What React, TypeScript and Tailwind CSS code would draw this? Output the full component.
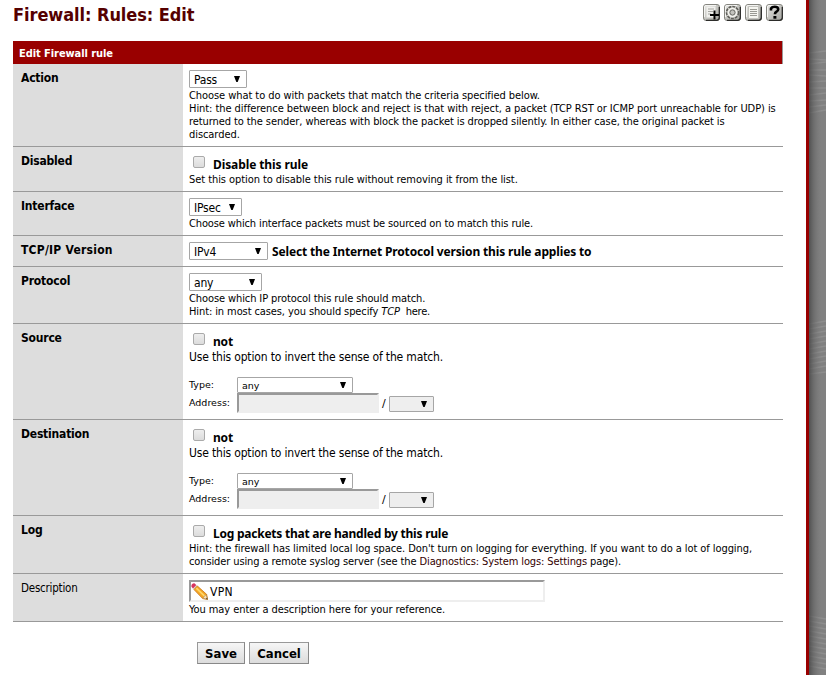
import type { ReactNode } from "react";

function Select({ value = "", className }: { value?: string; className: string }) {
  return (
    <div className={`flex shrink-0 items-center justify-between rounded-[1px] border border-[#a6a6a6] pl-1 pr-[6px] ${className}`}>
      <span className="pt-px">{value}</span>
      <svg width="6" height="6" viewBox="0 0 6 6">
        <path d="M0 0h6L3.7 6H2.3z" fill="#000" />
      </svg>
    </div>
  );
}

function Checkbox() {
  return <span className="ml-1 block size-3 shrink-0 rounded-[2px] border border-[#aaa] bg-linear-to-b from-[#eee] to-[#dcdcdc]" />;
}

function Check({ children, className = "pt-[3px]", textClass = "mt-[2px] tracking-[-0.2px]" }: { children: ReactNode; className?: string; textClass?: string }) {
  return (
    <div className={`flex h-5 items-start ${className}`}>
      <Checkbox />
      <span className={`ml-2 font-['Noto_Sans',sans-serif] text-[12px] leading-[14px] font-bold whitespace-nowrap ${textClass}`}>{children}</span>
    </div>
  );
}

function Row({ label, className, labelClass = "font-bold text-[12px] tracking-[-0.2px]", children }: { label: string; className: string; labelClass?: string; children: ReactNode }) {
  return (
    <div className={`flex border-b border-[#999] ${className}`}>
      <div className={`w-[170px] shrink-0 bg-[#ddd] pt-[6px] pl-2 leading-4 ${labelClass}`}>{label}</div>
      <div className="min-w-0 grow pt-[6px] pl-[6px]">{children}</div>
    </div>
  );
}

function Hint({ children, className = "", tracking = "tracking-[-0.065px]" }: { children: ReactNode; className?: string; tracking?: string }) {
  return <div className={`text-[11px] leading-[13px] whitespace-nowrap ${tracking} ${className}`}>{children}</div>;
}

function Address() {
  return (
    <>
      <Check className="pt-[3px]" textClass="mt-[2px] tracking-[-0.2px]">not</Check>
      <div className="-mt-px h-[28px] text-[12px] leading-4 tracking-[-0.165px] whitespace-nowrap">Use this option to invert the sense of the match.</div>
      <div className="flex h-4 items-center font-['DejaVu_Sans',sans-serif] text-[9.5px]">
        <span className="w-12 pt-px">Type:</span>
        <Select value="any" className="h-4 w-[116px] leading-[13px]" />
      </div>
      <div className="flex h-5 items-center font-['DejaVu_Sans',sans-serif] text-[9.5px]">
        <span className="w-12">Address:</span>
        <div className="h-5 w-[142px] border-2 border-[#eee] border-t-[#999] border-l-[#999] bg-[#eee]" />
        <span className="w-[10px] pt-[2px] pl-[3px] text-[11px]">/</span>
        <Select className="mt-[2px] h-4 w-[45px] bg-[#eee]" />
      </div>
    </>
  );
}

function IconTile({ children }: { children: ReactNode }) {
  return (
    <svg width="17" height="17" viewBox="0 0 17 17">
      <defs>
        <linearGradient id="tile" x1="0" y1="0" x2="1" y2="1">
          <stop offset="0" stopColor="#e9e9e6" />
          <stop offset="1" stopColor="#a2a29d" />
        </linearGradient>
      </defs>
      <rect x="0.5" y="0.5" width="16" height="16" rx="2.5" fill="url(#tile)" stroke="#85857f" />
      <path d="M16.3 3v10.5q0 2.8-2.8 2.8H3" fill="none" stroke="#2c2c2a" strokeWidth="1.3" />
      <path d="M1.5 13V3q0-1.5 1.5-1.5h10" fill="none" stroke="#f4f4f2" />
      {children}
    </svg>
  );
}

function Pencil() {
  return (
    <svg width="17" height="17" viewBox="0 0 16 16" className="shrink-0">
      <path d="M0.4 3.6Q0 0.6 3.2 0.3L5.2 2 2 5.4z" fill="#d8345f" />
      <path d="M1.9 5.1 5 1.8 6.2 2.9 3.1 6.3z" fill="#d9cfc8" />
      <path d="M2.8 6.2 6 2.8l8.7 7.9 1 4.8-4.7-.8z" fill="#f5a623" stroke="#c56e10" strokeWidth="0.7" />
      <path d="M5 4.8l8.3 8" stroke="#ffd76a" strokeWidth="1.5" />
      <path d="M11 14.3l3.2-3.4 1.3 4.4z" fill="#f5dfba" stroke="#a97835" strokeWidth="0.5" />
      <path d="M14.1 14.9l1-1.1.5 1.8z" fill="#333" />
    </svg>
  );
}

function Button({ children, className }: { children: ReactNode; className: string }) {
  return (
    <button className={`h-[22px] border border-[#999] border-r-[#888] border-b-[#888] bg-linear-to-b from-[#f6f6f6] to-[#dcdcdc] pt-px text-[13px] leading-5 font-bold ${className}`}>{children}</button>
  );
}

export default function App() {
  return (
    <div className="flex h-[675px] w-[826px] overflow-hidden bg-white font-['DejaVu_Sans_Condensed','DejaVu_Sans',sans-serif] text-black">
      <main className="w-[806px] shrink-0 pl-[13px]">
        <header className="flex h-[41px] w-[770px] items-start justify-between pt-1">
          <h1 className="-mt-px text-[18px] leading-[24px] font-bold tracking-[-0.07px] text-[#500]">Firewall: Rules: Edit</h1>
          <div className="flex gap-1">
            <IconTile>
              <path d="M3.5 2.5h9v11h-9z" fill="#f0f0ed" />
              <path d="M5 5h6M5 7.5h5M5 10h3" stroke="#a4a4a0" />
              <path d="M11.5 6.5v9M7 11h9" stroke="#000" strokeWidth="2" />
            </IconTile>
            <IconTile>
              <circle cx="8.5" cy="8.5" r="6" fill="#deded9" stroke="#5e5e59" strokeWidth="1.6" strokeDasharray="3 0.9" />
              <circle cx="8.5" cy="8.5" r="4" fill="none" stroke="#f4f4f0" strokeWidth="1.2" />
              <circle cx="8.5" cy="8.5" r="2.6" fill="#c2c2bd" stroke="#6b6b66" />
            </IconTile>
            <IconTile>
              <path d="M3.5 2.5h10v12h-10z" fill="#f5f5f0" stroke="#c4c4bf" />
              <path d="M5 5.5h7M5 7.5h7M5 9.5h7M5 11.5h7" stroke="#999993" />
            </IconTile>
            <IconTile>
              <path d="M5 6.5V4.5Q6 2.8 8.7 2.8q3.5 0 3.5 2.5 0 1.6-1.8 2.5-1.5.7-1.5 2.4" fill="none" stroke="#000" strokeWidth="2.6" />
              <path d="M7.4 12h3v2.7h-3z" fill="#000" />
            </IconTile>
          </div>
        </header>

        <div className="w-[770px]">
          <div className="h-[23px] border-r border-[#999] bg-[#900] pt-px pl-[6px] text-[11px] leading-[23px] font-bold tracking-[-0.07px] text-white">Edit Firewall rule</div>

          <Row label="Action" className="h-[83px]">
            <Select value="Pass" className="h-[18px] w-[58px] text-[12px] leading-4 tracking-[-0.2px]" />
            <Hint className="pt-px">
              Choose what to do with packets that match the criteria specified below.<br />
              Hint: the difference between block and reject is that with reject, a packet (TCP RST or ICMP port unreachable for UDP) is<br />
              <span className="tracking-[-0.085px]">returned to the sender, whereas with block the packet is dropped silently. In either case, the original packet is</span><br />
              discarded.
            </Hint>
          </Row>

          <Row label="Disabled" className="h-[45px]">
            <Check textClass="mt-[2px] tracking-[-0.1px]">Disable this rule</Check>
            <Hint>Set this option to disable this rule without removing it from the list.</Hint>
          </Row>

          <Row label="Interface" className="h-[44px]">
            <Select value="IPsec" className="h-[18px] w-[53px] text-[12px] leading-4 tracking-[-0.2px]" />
            <Hint className="pt-px" tracking="tracking-[-0.125px]">Choose which interface packets must be sourced on to match this rule.</Hint>
          </Row>

          <Row label="TCP/IP Version" className="h-[31px]" labelClass="font-bold text-[12px] tracking-[0.24px]">
            <div className="flex items-center">
              <Select value="IPv4" className="h-[18px] w-[79px] text-[12px] leading-4 tracking-[-0.2px]" />
              <span className="ml-1 pt-px font-['Noto_Sans',sans-serif] text-[12px] leading-[17px] font-bold tracking-[-0.145px]">Select the Internet Protocol version this rule applies to</span>
            </div>
          </Row>

          <Row label="Protocol" className="h-[57px]">
            <Select value="any" className="h-[18px] w-[73px] text-[12px] leading-4 tracking-[-0.2px]" />
            <Hint className="pt-px" tracking="tracking-[-0.1px]">
              Choose which IP protocol this rule should match.<br />
              Hint: in most cases, you should specify <em>TCP</em>&nbsp;<span className="tracking-[-0.3px]"> here.</span>
            </Hint>
          </Row>

          <Row label="Source" className="h-[96px]"><Address /></Row>
          <Row label="Destination" className="h-[96px]"><Address /></Row>

          <Row label="Log" className="h-[58px]">
            <Check textClass="mt-[2px] tracking-[-0.235px]">Log packets that are handled by this rule</Check>
            <Hint tracking="tracking-[-0.075px]">
              Hint: the firewall has limited local log space. Don't turn on logging for everything. If you want to do a lot of logging,<br />
              <span className="tracking-[-0.11px]">consider using a remote syslog server (see the <a className="text-[#300]">Diagnostics: System logs: Settings</a> page).</span>
            </Hint>
          </Row>

          <Row label="Description" className="h-[48px]" labelClass="text-[11.5px] tracking-[-0.22px]">
            <div className="flex h-[22px] w-[356px] items-center border-2 border-[#eee] border-t-[#999] border-l-[#999] text-[12px]">
              <Pencil />
              <span className="ml-[2px] pt-px tracking-[0.3px]">VPN</span>
            </div>
            <Hint className="pt-px">You may enter a description here for your reference.</Hint>
          </Row>
        </div>

        <div className="mt-5 ml-[184px] flex gap-1">
          <Button className="w-12">Save</Button>
          <Button className="w-[60px]">Cancel</Button>
        </div>
      </main>

      <aside className="flex grow border-l-[3px] border-[#900] bg-[#818181]">
        <svg width="17" height="675" viewBox="0 0 17 675">
          <defs>
            <linearGradient id="shade">
              <stop offset="0" stopColor="#444" stopOpacity="0.8" />
              <stop offset="0.3" stopColor="#5c5c5c" stopOpacity="0.5" />
              <stop offset="0.75" stopColor="#777" stopOpacity="0" />
            </linearGradient>
          </defs>
          <g stroke="#a4a4a4" strokeWidth="1.3" opacity="0.38">
            <path d="M0 53l17-2M0 59l17 1M0 64l17-2M0 70h17M0 75l17 1M0 82l17-1M0 88h17M0 95l17-2M0 101l17-1M0 107l17-2M0 113l17-3" />
            <path d="M0 324l17-3M0 329l17-3M0 334l17-3M0 339l17-3M0 344l17-3M0 349l17-3M0 354l17-3M0 359l17-3M0 364l17-3M0 369l17-3M0 374l17-2" />
            <path d="M0 616l17 3M0 621l17 3M0 626l17 3M0 631l17 3M0 636l17 3M0 641l17 3M0 646l17 3M0 651l17 3M0 656l17 3M0 661l17 3M0 666l17 3" />
          </g>
          <rect width="17" height="675" fill="url(#shade)" />
        </svg>
      </aside>
    </div>
  );
}
